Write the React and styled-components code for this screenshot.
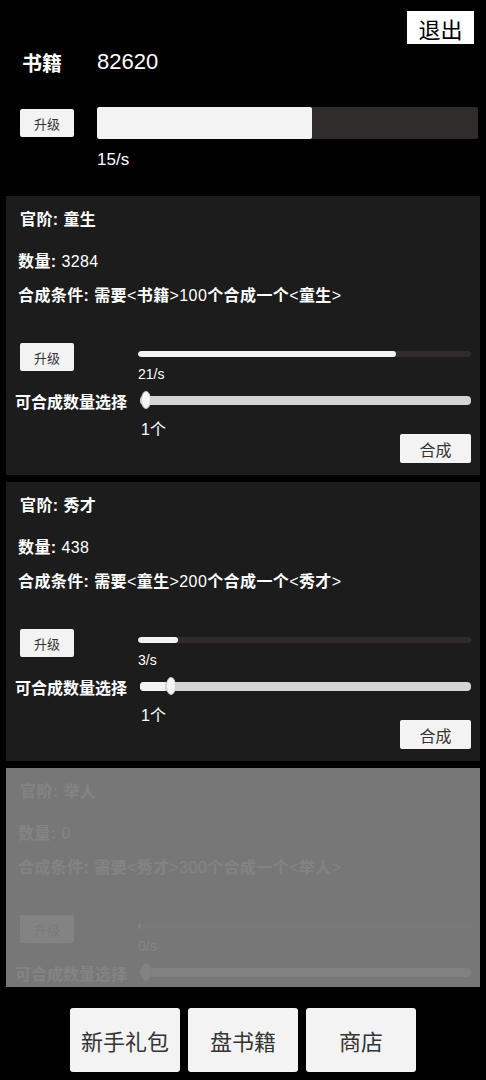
import React from "react";
import styled, { createGlobalStyle } from "styled-components";

const GlobalStyle = createGlobalStyle`
  html, body {
    margin: 0;
    padding: 0;
    background: #000;
  }
  body {
    font-family: "Liberation Sans", "Noto Sans CJK SC", sans-serif;
    color: #fff;
  }
  * { box-sizing: border-box; }
`;

const Page = styled.div`
  width: 486px;
  height: 1080px;
  display: flex;
  flex-direction: column;
  background: #000;
  overflow: hidden;
`;

const Header = styled.header`
  display: flex;
  flex-direction: column;
  padding-top: 11px;
`;

const ExitRow = styled.div`
  display: flex;
  justify-content: flex-end;
  padding-right: 12px;
`;

const ExitButton = styled.button`
  width: 67px;
  height: 33px;
  border: none;
  border-radius: 0;
  background: #fff;
  color: #000;
  font-family: inherit;
  font-size: 22px;
  padding: 0;
`;

const TotalRow = styled.div`
  display: flex;
  align-items: center;
  height: 28px;
  margin-top: 4px;
  padding-left: 22px;
`;

const TotalLabel = styled.span`
  width: 75px;
  font-size: 20px;
  font-weight: 700;
`;

const TotalValue = styled.span`
  font-size: 22px;
`;

const MainUpgrade = styled.div`
  display: flex;
  align-items: center;
  margin-top: 31px;
  padding: 0 8px 0 20px;
  gap: 23px;
`;

const SmallButton = styled.button`
  flex: none;
  width: 54px;
  height: 28px;
  border: none;
  border-radius: 2px;
  background: #f3f3f3;
  color: #333;
  font-family: inherit;
  font-size: 13px;
  padding: 0;
`;

const Bar = styled.div`
  flex: 1;
  height: ${({ $h }) => $h}px;
  background: #302c2b;
  border-radius: ${({ $h }) => ($h > 10 ? 2 : 3)}px;
  overflow: hidden;
`;

const BarFill = styled.div`
  height: 100%;
  background: #f3f3f3;
  border-radius: inherit;
`;

const MainRate = styled.div`
  margin-top: 11px;
  padding-left: 97px;
  font-size: 17px;
  line-height: 20px;
`;

const ScrollArea = styled.div`
  flex: 1;
  min-height: 0;
  overflow: hidden;
  margin-top: 26px;
  display: flex;
  flex-direction: column;
  gap: 7px;
`;

const Card = styled.section`
  position: relative;
  flex: none;
  margin: 0 6px;
  height: 279px;
  background: #1c1c1c;
  padding: 12px 9px 12px 0;
  display: flex;
  flex-direction: column;
`;

const InfoLine = styled.div`
  height: 24px;
  line-height: 24px;
  font-size: 16px;
  font-weight: 700;
  letter-spacing: 0.4px;
  padding-left: ${({ $indent }) => $indent}px;
  margin-top: ${({ $gap }) => $gap}px;
  white-space: nowrap;
`;

const Plain = styled.span`
  font-weight: 400;
`;

const ControlGrid = styled.div`
  display: grid;
  grid-template-columns: 132px 1fr;
  margin-top: 35px;
`;

const LeftCell = styled.div`
  padding-left: ${({ $indent }) => $indent}px;
`;

const RightCell = styled.div`
  display: flex;
  flex-direction: column;
`;

const ThinBarRow = styled.div`
  display: flex;
  margin-top: 8px;
`;

const Rate = styled.div`
  margin-top: 8px;
  font-size: 14px;
  line-height: 18px;
`;

const SelectLabel = styled.div`
  margin-top: 8px;
  padding-left: 9px;
  font-size: 16px;
  font-weight: 700;
  line-height: 24px;
  white-space: nowrap;
`;

const SliderWrap = styled.div`
  position: relative;
  margin-top: 8px;
  margin-left: 2px;
  height: 18px;
  display: flex;
  align-items: center;
`;

const SliderTrack = styled.div`
  flex: 1;
  height: 9px;
  border-radius: 4px;
  background: #d4d4d4;
  overflow: hidden;
`;

const SliderFill = styled.div`
  height: 100%;
  background: #f3f3f3;
`;

const SliderThumb = styled.div`
  position: absolute;
  top: 0;
  width: 10px;
  height: 18px;
  border-radius: 50%;
  background: #f5f5f5;
  border: 1px solid #cfcfcf;
`;

const BottomRow = styled.div`
  display: flex;
  justify-content: space-between;
  align-items: flex-start;
`;

const Count = styled.div`
  margin-top: 6px;
  padding-left: 3px;
  font-size: 16px;
  line-height: 18px;
`;

const MakeButton = styled.button`
  margin-top: 19px;
  width: 71px;
  height: 29px;
  border: none;
  border-radius: 2px;
  background: #f3f3f3;
  color: #333;
  font-family: inherit;
  font-size: 16px;
  padding: 0;
`;

const Lock = styled.div`
  position: absolute;
  inset: 0;
  background: rgba(124, 124, 124, 0.95);
`;

const Footer = styled.footer`
  flex: none;
  height: 93px;
  display: flex;
  justify-content: center;
  gap: 8px;
  padding-top: 21px;
`;

const NavButton = styled.button`
  width: 110px;
  height: 64px;
  border: none;
  border-radius: 3px;
  background: #f3f3f3;
  color: #333;
  font-family: inherit;
  font-size: 22px;
  padding: 0;
`;

const ranks = [
  { name: "童生", count: 3284, from: "书籍", need: 100, rate: 21, progress: 77.5, slider: 0, locked: false },
  { name: "秀才", count: 438, from: "童生", need: 200, rate: 3, progress: 12, slider: 7.5, locked: false },
  { name: "举人", count: 0, from: "秀才", need: 300, rate: 0, progress: 1, slider: 0, locked: true },
];

const RankCard = ({ rank }) => (
  <Card>
    <InfoLine $indent={14} $gap={0}>官阶: {rank.name}</InfoLine>
    <InfoLine $indent={12} $gap={18}>
      数量: <Plain>{rank.count}</Plain>
    </InfoLine>
    <InfoLine $indent={12} $gap={10}>
      合成条件: 需要<Plain>&lt;</Plain>{rank.from}<Plain>&gt;{rank.need}</Plain>个合成一个
      <Plain>&lt;</Plain>{rank.name}<Plain>&gt;</Plain>
    </InfoLine>
    <ControlGrid>
      <LeftCell $indent={14}>
        <SmallButton>升级</SmallButton>
      </LeftCell>
      <RightCell>
        <ThinBarRow>
          <Bar $h={6}>
            <BarFill style={{ width: `${rank.progress}%` }} />
          </Bar>
        </ThinBarRow>
        <Rate>{rank.rate}/s</Rate>
      </RightCell>
      <LeftCell $indent={0}>
        <SelectLabel>可合成数量选择</SelectLabel>
      </LeftCell>
      <RightCell>
        <SliderWrap>
          <SliderTrack>
            <SliderFill style={{ width: `${rank.slider}%` }} />
          </SliderTrack>
          <SliderThumb style={{ left: `calc(${rank.slider}% + 1px)` }} />
        </SliderWrap>
      </RightCell>
      <div />
      <BottomRow>
        <Count>1个</Count>
        <MakeButton>合成</MakeButton>
      </BottomRow>
    </ControlGrid>
    {rank.locked && <Lock />}
  </Card>
);

const App = () => (
  <Page>
    <GlobalStyle />
    <Header>
      <ExitRow>
        <ExitButton>退出</ExitButton>
      </ExitRow>
      <TotalRow>
        <TotalLabel>书籍</TotalLabel>
        <TotalValue>82620</TotalValue>
      </TotalRow>
      <MainUpgrade>
        <SmallButton>升级</SmallButton>
        <Bar $h={32}>
          <BarFill style={{ width: "56.4%" }} />
        </Bar>
      </MainUpgrade>
      <MainRate>15/s</MainRate>
    </Header>
    <ScrollArea>
      {ranks.map((r) => (
        <RankCard key={r.name} rank={r} />
      ))}
    </ScrollArea>
    <Footer>
      <NavButton>新手礼包</NavButton>
      <NavButton>盘书籍</NavButton>
      <NavButton>商店</NavButton>
    </Footer>
  </Page>
);

export default App;
